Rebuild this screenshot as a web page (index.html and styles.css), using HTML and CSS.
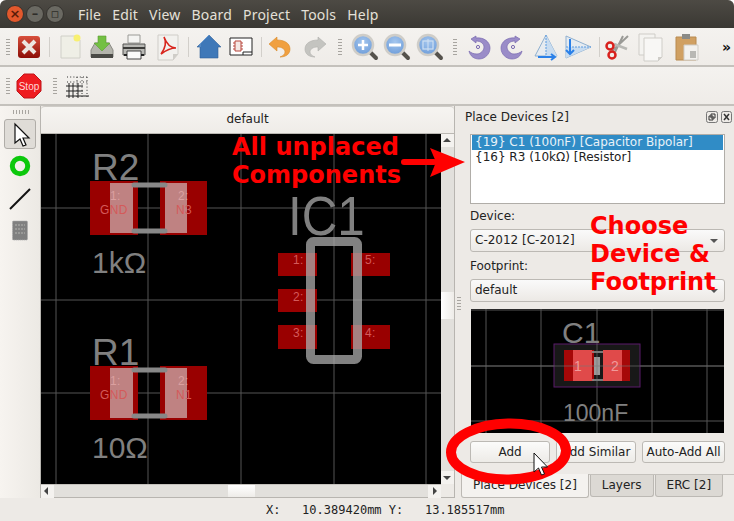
FILE: index.html
```html
<!DOCTYPE html>
<html lang="en">
<head>
    <meta charset="UTF-8" />
    <title>LibrePCB Board Editor</title>
    <link rel="stylesheet" href="styles.css">
</head>
<body>
<div class="window">
    <!-- title bar -->
    <div class="titlebar">
        <div class="winbtns">
            <span class="winbtn close">×</span>
            <span class="winbtn">–</span>
            <span class="winbtn">▫</span>
        </div>
        <nav class="menu">
            <span>File</span><span>Edit</span><span>View</span><span>Board</span><span>Project</span><span>Tools</span><span>Help</span>
        </nav>
    </div>

    <!-- main toolbar -->
    <div class="toolbar tb-main">
        <span class="handle"></span>
        <svg class="ic" viewBox="0 0 32 32"><defs><linearGradient id="ex" x1="0" y1="0" x2="0" y2="1"><stop offset="0" stop-color="#d8503c"/><stop offset="1" stop-color="#8c0d06"/></linearGradient><radialGradient id="lens" cx=".5" cy=".35" r=".7"><stop offset="0" stop-color="#a4c6ee"/><stop offset="1" stop-color="#6a9ad8"/></radialGradient></defs><rect x="5" y="5" width="22" height="22" rx="3" fill="url(#ex)"/><path d="M10 10l12 12M22 10L10 22" stroke="#ece6e0" stroke-width="4"/></svg>
        <span class="sep"></span>
        <svg class="ic" viewBox="0 0 32 32"><path d="M7 5h15l4 4v18H7z" fill="#efefe6" stroke="#d0d0c8"/><circle cx="23" cy="7" r="3.500" fill="#f8f070"/></svg>
        <svg class="ic" viewBox="0 0 32 32"><path d="M5 19l4-7h14l4 7v7H5z" fill="#b4b4ac" stroke="#8a8a84"/><path d="M5 23h22v4H5z" fill="#4a4a46"/><path d="M12 5h8v7h4l-8 8-8-8h4z" fill="#73c043" stroke="#5a9c30" stroke-width=".6"/></svg>
        <svg class="ic" viewBox="0 0 32 32"><path d="M10 4h12v8H10z" fill="#f4f4f2" stroke="#9a9a96"/><path d="M5 13h22v11H5z" fill="#b8b8b4" stroke="#555552"/><path d="M5 17h22" stroke="#3c3c3a" stroke-width="2"/><path d="M9 20h14v8H9z" fill="#fafafa" stroke="#444"/><path d="M6 24h3M23 24h3" stroke="#222" stroke-width="2"/></svg>
        <svg class="ic ic-m" viewBox="0 0 32 32"><path d="M6 4h20v19l-5 6H6z" fill="#f2f1ee" stroke="#cfcdc8"/><path d="M21 29l0-6h5z" fill="#cfcdc8"/><path d="M12 6c4 8-1 14-3 17 4-3 8-6 15-6-5 0-9-3-12-11z" fill="none" stroke="#d8261e" stroke-width="1.600"/></svg>
        <span class="sep"></span>
        <svg class="ic" viewBox="0 0 32 32"><path d="M16 4l12 12h-3v11H7V16H4l8-8z" fill="#3f78b8" stroke="#2f6098" stroke-width=".6"/><path d="M16 4L7 13v3" fill="none" stroke="#6a9ad0"/></svg>
        <svg class="ic" viewBox="0 0 32 32"><path d="M5 7h22v17H5z" fill="#fff" stroke="#222" stroke-width="1"/><path d="M18 24v-3h9" fill="none" stroke="#222"/><path d="M10 10h6v10h-6z" fill="#f4e8e4" stroke="#b8463c"/><path d="M8 12h2M8 15h2M8 18h2M16 12h2M16 15h2M16 18h2" stroke="#b8463c"/></svg>
        <span class="sep sep-s"></span>
        <svg class="ic" viewBox="0 0 32 32"><path d="M13 6l-8 7 8 7v-4c5 0 8 2 8 5 0 2-2 4-5 5 6 0 10-3 10-8 0-6-6-9-13-9z" fill="#f0a040" stroke="#d88a28" stroke-width=".6"/></svg>
        <svg class="ic ic-gap" viewBox="0 0 32 32"><path d="M19 6l8 7-8 7v-4c-5 0-8 2-8 5 0 2 2 4 5 5-6 0-10-3-10-8 0-6 6-9 13-9z" fill="#c4c4c0" stroke="#b0b0ac" stroke-width=".6"/></svg>
        <span class="handle h2"></span>
        <svg class="ic" viewBox="0 0 32 32"><path d="M19 19l8 8" stroke="#55524c" stroke-width="4" stroke-linecap="round"/><circle cx="14" cy="14" r="10" fill="url(#lens)" stroke="#cfcdc8" stroke-width="2.500"/><path d="M9 14h10M14 9v10" stroke="#fff" stroke-width="2.500"/></svg>
        <svg class="ic" viewBox="0 0 32 32"><path d="M19 19l8 8" stroke="#55524c" stroke-width="4" stroke-linecap="round"/><circle cx="14" cy="14" r="10" fill="url(#lens)" stroke="#cfcdc8" stroke-width="2.500"/><path d="M8 14h12" stroke="#fff" stroke-width="3"/></svg>
        <svg class="ic ic-one" viewBox="0 0 32 32"><path d="M19 19l8 8" stroke="#55524c" stroke-width="4" stroke-linecap="round"/><circle cx="14" cy="14" r="10" fill="url(#lens)" stroke="#cfcdc8" stroke-width="2.500"/><rect x="9" y="10" width="10" height="8" fill="none" stroke="#cfdff2" stroke-width="1.200"/><path d="M14 8v12" stroke="#cfdff2"/></svg>
        <span class="handle h3"></span>
        <svg class="ic" viewBox="0 0 32 32"><path d="M13 5l-5 3 5 4v-2c5 0 8 3 8 6s-3 7-7 7c-3 0-6-1-8-3 1 5 5 8 10 8 6 0 11-5 11-11S21 6 13 7z" fill="#9a8cc8" stroke="#7a6ab0" stroke-width=".7"/><circle cx="15" cy="16" r="1.600" fill="none" stroke="#7a6ab0"/></svg>
        <svg class="ic ic-one" viewBox="0 0 32 32"><path d="M19 5l5 3-5 4v-2c-5 0-8 3-8 6s3 7 7 7c3 0 6-1 8-3-1 5-5 8-10 8-6 0-11-5-11-11S11 6 19 7z" fill="#9a8cc8" stroke="#7a6ab0" stroke-width=".7"/><circle cx="17" cy="16" r="1.600" fill="none" stroke="#7a6ab0"/></svg>
        <svg class="ic ic-m" viewBox="0 0 32 32"><path d="M16 4L5 25h22z" fill="#e6ebf0" stroke="#8fb0d0"/><path d="M16 4l11 21H16z" fill="#c8dcf0"/><path d="M16 4v24" stroke="#5a9ae0" stroke-dasharray="2 1"/><path d="M8 26h16m-3-3l4 3-4 3" fill="none" stroke="#2a80e8" stroke-width="2"/></svg>
        <svg class="ic" viewBox="0 0 32 32"><path d="M4 5l25 11L4 27z" fill="#e6ebf0" stroke="#8fb0d0"/><path d="M4 16h25L4 27z" fill="#c8dcf0"/><path d="M4 16h25" stroke="#5a9ae0" stroke-dasharray="2 1"/><path d="M8 8v14m-4-3l4 4 4-4" fill="none" stroke="#2a80e8" stroke-width="2"/></svg>
        <span class="sep sep-m"></span>
        <svg class="ic" viewBox="0 0 32 32"><path d="M27 5L11 20M22 5L14 21" stroke="#9a9a96" stroke-width="2"/><path d="M26 18L13 13" stroke="#b8b8b4" stroke-width="2.500"/><circle cx="9" cy="15" r="3.500" fill="none" stroke="#d8201c" stroke-width="2.500"/><circle cx="11" cy="24" r="3.500" fill="none" stroke="#d8201c" stroke-width="2.500"/></svg>
        <svg class="ic ic-one" viewBox="0 0 32 32"><path d="M5 3h16v21H5z" fill="#f4f3f0" stroke="#cfcdc8"/><path d="M10 7h18v19l-4 4H10z" fill="#f8f7f5" stroke="#cfcdc8"/><path d="M24 30v-4h4z" fill="#cfcdc8"/></svg>
        <svg class="ic ic-four" viewBox="0 0 32 32"><path d="M6 6h20v23H6z" fill="#d0a062" stroke="#b88a50"/><path d="M12 3h8v5h-8z" fill="#8a8a86"/><path d="M14 14h14v15H14z" fill="#f2f1ee" stroke="#cfcdc8"/><path d="M20 20h6v7h-6z" fill="#b8b8b4"/></svg>
        <span class="more">»</span>
    </div>

    <!-- second toolbar -->
    <div class="toolbar tb-second">
        <span class="handle"></span>
        <svg class="ic" viewBox="0 0 32 32"><path d="M11 4h10l7 7v10l-7 7H11l-7-7V11z" fill="#ee1c20" stroke="#c0141a"/><text x="16" y="20" class="stop-txt">Stop</text></svg>
        <span class="handle h4"></span>
        <svg class="ic" viewBox="0 0 32 32"><g fill="none" stroke="#333" stroke-dasharray="1 2.200"><path d="M7 7h22M7 12h22M17 7v20M22 7v20M27 7v20"/></g><path d="M6 16h17M6 21h17M6 26h23M9 13v15M13 13v15M18 13v15" stroke="#222" fill="none"/></svg>
    </div>

    <div class="main">
        <!-- left tools -->
        <div class="tools">
            <span class="handle-h"></span>
            <button class="toolbtn active"><svg width="30" height="28" viewBox="0 0 30 28"><path d="M10 4v19l5-4 3 7 3-1-3-7h6z" fill="#fff" stroke="#111" stroke-width="1.200"/></svg></button>
            <svg class="tool" viewBox="0 0 32 32"><circle cx="16" cy="16" r="7.700" fill="none" stroke="#0cc80c" stroke-width="5"/></svg>
            <svg class="tool" viewBox="0 0 32 32"><path d="M6 26L26 6" stroke="#111" stroke-width="2"/></svg>
            <svg class="tool" viewBox="0 0 32 32"><rect x="8.500" y="5" width="15" height="19" rx="1" fill="#808080" stroke="#aaa" stroke-dasharray="1 1"/><path d="M11 9h10M11 13h10M11 17h10" stroke="#b4b4b0" stroke-dasharray="2 1"/></svg>
        </div>

        <!-- board editor -->
        <div class="editor">
            <div class="tab">default</div>
            <div class="view">
                <svg class="canvas" viewBox="41 134 400 350">
                    <g class="grid">
                        <path d="M56 134v350M148 134v350M241 134v350M334 134v350M426 134v350M41 208h400M41 300h400M41 393h400"/>
                    </g>
                    <g class="pads">
                        <rect x="90" y="181" width="48" height="54"/><rect x="160" y="181" width="47" height="54"/>
                        <rect x="90" y="366" width="48" height="54"/><rect x="160" y="366" width="47" height="54"/>
                        <rect x="278" y="253" width="39" height="23"/><rect x="351" y="253" width="39" height="23"/>
                        <rect x="278" y="289" width="39" height="23"/>
                        <rect x="278" y="325" width="39" height="24"/><rect x="351" y="325" width="39" height="24"/>
                    </g>
                    <g class="overlay">
                        <rect x="110" y="183" width="23" height="50"/><rect x="165" y="183" width="22" height="50"/>
                        <rect x="110" y="368" width="23" height="50"/><rect x="165" y="368" width="22" height="50"/>
                    </g>
                    <path class="silk" d="M134 185h31M134 231h31M134 370h31M134 416h31"/>
                    <rect class="outline" x="310.500" y="241.500" width="47" height="118" rx="3"/>
                    <g class="padtxt">
                        <text x="110" y="200" class="pin">1:</text><text x="100" y="214">GND</text>
                        <text x="178" y="200" class="pin">2:</text><text x="176" y="214">N3</text>
                        <text x="110" y="385" class="pin">1:</text><text x="100" y="399">GND</text>
                        <text x="178" y="385" class="pin">2:</text><text x="176" y="399">N1</text>
                        <text x="293" y="264">1:</text><text x="365" y="264">5:</text>
                        <text x="293" y="301">2:</text>
                        <text x="293" y="337">3:</text><text x="365" y="337">4:</text>
                    </g>
                    <g class="label">
                        <text x="92" y="180">R2</text><text x="92" y="273" class="val">1kΩ</text>
                        <text x="92" y="365">R1</text><text x="92" y="458" class="val">10Ω</text>
                        <text transform="translate(288 235) scale(.88 1)" class="big">IC1</text>
                    </g>
                </svg>
                <div class="vscroll">
                    <span class="arrow up"></span>
                    <span class="vthumb"></span>
                    <span class="arrow down"></span>
                </div>
                <div class="hscroll">
                    <span class="arrow left"></span>
                    <span class="hthumb"></span>
                    <span class="arrow right"></span>
                </div>
                <span class="corner"></span>
            </div>
        </div>

        <span class="dock-grip"></span>

        <!-- dock -->
        <div class="dock">
            <div class="dock-title">
                <span>Place Devices [2]</span>
                <span class="dock-btns">
                    <svg width="12" height="12" viewBox="0 0 12 12"><rect x=".5" y=".5" width="11" height="11" rx="2" fill="none" stroke="#777"/><path d="M5 3h4v4H5zM3 5h4v4H3z" fill="none" stroke="#333"/></svg>
                    <svg width="11" height="12" viewBox="0 0 11 12"><rect x=".5" y=".5" width="10" height="11" rx="2" fill="none" stroke="#777"/><path d="M3 3l5 6M8 3L3 9" stroke="#333" stroke-width="1.500"/></svg>
                </span>
            </div>
            <div class="dock-body">
                <ul class="list">
                    <li class="selected">{19} C1 (100nF) [Capacitor Bipolar]</li>
                    <li>{16} R3 (10kΩ) [Resistor]</li>
                </ul>
                <label class="fld">Device:</label>
                <div class="combo">C-2012 [C-2012]</div>
                <label class="fld">Footprint:</label>
                <div class="combo">default</div>
                <svg class="preview" viewBox="471 309 253 124">
                    <g class="grid">
                        <path d="M486 309v124M541 309v124M597 309v124M652 309v124M707 309v124M471 310h253M471 366h253M471 421h253"/>
                    </g>
                    <rect x="554" y="344" width="86" height="43" fill="#181818" stroke="#5a1a6a"/>
                    <rect x="564" y="350" width="30" height="31" fill="#a60808"/><rect x="603" y="350" width="27" height="31" fill="#a60808"/>
                    <rect x="573" y="350" width="19" height="31" fill="#e04a4a"/><rect x="603" y="350" width="19" height="31" fill="#e04a4a"/>
                    <path d="M592 352h11M592 380h11" stroke="#999" stroke-width="1.500"/>
                    <rect x="594" y="357" width="6" height="18" fill="#999"/>
                    <path d="M471 366h253M597 344v43" stroke="#777" opacity=".6"/>
                    <g class="padnum"><text x="574" y="371">1</text><text x="611" y="371">2</text></g>
                    <g class="label small"><text x="562" y="343" class="c1">C1</text><text x="563" y="421">100nF</text></g>
                </svg>
                <div class="btnrow">
                    <button class="btn">Add</button>
                    <button class="btn">Add Similar</button>
                    <button class="btn">Auto-Add All</button>
                </div>
            </div>
            <div class="tabs">
                <span class="dtab on">Place Devices [2]</span>
                <span class="dtab">Layers</span>
                <span class="dtab">ERC [2]</span>
            </div>
        </div>
    </div>

    <div class="statusbar">X:   10.389420mm Y:   13.185517mm</div>

    <!-- annotations drawn on top of the screenshot -->
    <div class="note note1">All unplaced<br>Components</div>
    <div class="note note2">Choose<br>Device &amp;<br>Footprint</div>
    <svg class="marks" viewBox="0 0 734 521">
        <path d="M404 162h30" stroke="#f00" stroke-width="6" stroke-linecap="round"/>
        <path d="M430 148l35 14-35 15 6-15z" fill="#f00"/>
        <ellipse cx="508.500" cy="451.500" rx="57.500" ry="28" fill="none" stroke="#f00" stroke-width="10" transform="rotate(-1 508 451)"/>
        <path d="M534 453v19l4.500-4 3 7 3-1-3-7h6z" fill="#fff" stroke="#111"/>
    </svg>
</div>
</body>
</html>
```
FILE: styles.css
```css
* {
    box-sizing: border-box;
}
html, body {
    margin: 0;
    background: #fff;
}
body {
    font-family: "DejaVu Sans", sans-serif;
    font-size: 12px;
    color: #222;
}
.window {
    position: relative;
    width: 734px;
    height: 521px;
    display: flex;
    flex-direction: column;
    background: #edeae6;
    overflow: hidden;
    border-radius: 6px 6px 0 0;
}

/* title bar */
.titlebar {
    height: 28px;
    flex: none;
    display: flex;
    align-items: center;
    background: linear-gradient(#4d4a44, #3a3833);
}
.winbtns {
    display: flex;
    gap: 2px;
    padding-left: 6px;
    width: 78px;
}
.winbtn {
    width: 18px;
    height: 18px;
    border-radius: 50%;
    background: #6a6962;
    border: 1px solid #35332f;
    color: #2e2d29;
    font-size: 13px;
    font-weight: bold;
    line-height: 15px;
    text-align: center;
}
.winbtn.close {
    background: #e2582c;
    color: #5a1c08;
}
.menu {
    display: flex;
    gap: 11px;
    color: #e4e0d8;
    font-family: "Noto Sans", sans-serif;
    font-size: 14px;
    letter-spacing: .2px;
}

/* toolbars */
.toolbar {
    flex: none;
    display: flex;
    align-items: center;
    background: linear-gradient(#f4f2ef, #efece8);
    border-bottom: 2px solid #c4c1bc;
}
.tb-main {
    height: 39px;
    padding-left: 6px;
}
.tb-second {
    height: 39px;
    padding-left: 6px;
}
.ic {
    width: 32px;
    height: 32px;
    flex: none;
}
.ic-gap {
    margin-left: 3px;
}
.ic-m {
    margin-left: 2px;
}
.ic-one {
    margin-left: 1px;
}
.ic-four {
    margin-left: 4px;
}
.handle {
    width: 4px;
    height: 18px;
    flex: none;
    margin-right: 3px;
    background-image: radial-gradient(#a8a5a0 40%, transparent 45%);
    background-size: 2px 3px;
}
.h2 {
    margin: 0 7px 0 7px;
}
.h3 {
    margin: 0 6px 0 7px;
}
.h4 {
    margin: 0 3px 0 8px;
}
.sep {
    width: 1px;
    height: 20px;
    flex: none;
    margin: 0 4px;
    background: #d2cfca;
}
.sep-s {
    margin: 0 2px 0 4px;
}
.sep-m {
    margin: 0 1px 0 5px;
}
.more {
    margin-left: 20px;
    font-weight: bold;
    font-size: 14px;
    color: #111;
}
.stop-txt {
    font-family: "Liberation Sans", sans-serif;
    font-size: 10px;
    fill: #ffd8d8;
    text-anchor: middle;
}

/* main area */
.main {
    flex: 1;
    display: flex;
    min-height: 0;
}
.tools {
    width: 40px;
    flex: none;
    display: flex;
    flex-direction: column;
    align-items: center;
    padding-top: 4px;
    background: linear-gradient(90deg, #f7f4f0, #ece9e4);
}
.handle-h {
    width: 17px;
    height: 4px;
    background-image: radial-gradient(#a8a5a0 40%, transparent 45%);
    background-size: 3px 2px;
    margin-bottom: 5px;
}
.toolbtn {
    width: 32px;
    height: 30px;
    padding: 0;
    border: 1px solid #b0ada8;
    border-radius: 3px;
    background: #dfdcd7;
}
.tool {
    width: 32px;
    height: 32px;
    margin-bottom: 1px;
}
.tool:first-of-type {
    margin-top: 1px;
}
.editor {
    width: 415px;
    flex: none;
    display: flex;
    flex-direction: column;
    border-left: 1px solid #b8b5b0;
    border-right: 1px solid #b8b5b0;
    border-bottom: 1px solid #b8b5b0;
}
.tab {
    height: 28px;
    flex: none;
    text-align: center;
    line-height: 24px;
    background: linear-gradient(#f6f4f1, #efece8);
    border-top: 1px solid #cfccc7;
    border-radius: 4px 4px 0 0;
    border-bottom: 1px solid #bbb8b3;
}
.view {
    flex: 1;
    display: grid;
    grid-template-columns: 400px 13px;
    grid-template-rows: 350px 13px;
}
.canvas {
    width: 400px;
    height: 350px;
    background: #000;
    display: block;
}
.grid path {
    fill: none;
    stroke: #555;
    stroke-width: 1;
}
.pads rect {
    fill: #990000;
}
.overlay rect {
    fill: #d8d8d8;
    opacity: .6;
}
.silk {
    fill: none;
    stroke: #888;
    stroke-width: 5;
    stroke-linecap: round;
}
.outline {
    fill: none;
    stroke: #aaa;
    stroke-opacity: .76;
    stroke-width: 9;
}
.padtxt text {
    font-family: "Liberation Sans", sans-serif;
    font-size: 12px;
    letter-spacing: .4px;
    fill: #d45a5a;
}
.padtxt .pin {
    fill: #dba0a0;
}
.label text {
    font-family: "Liberation Sans", sans-serif;
    font-size: 37px;
    fill: #808080;
}
.label .val {
    font-size: 30px;
}
.label .big {
    font-size: 56px;
}
.label.small text {
    font-size: 23px;
}
.label.small .c1 {
    font-size: 30px;
}
.padnum text {
    font-family: "Liberation Sans", sans-serif;
    font-size: 14px;
    fill: #f09a9a;
}
.vscroll {
    display: flex;
    flex-direction: column;
    background: #e2e0dc;
}
.hscroll {
    display: flex;
    background: #e2e0dc;
    border-top: 1px solid #c4c1bc;
}
.corner {
    background: #edeae6;
}
.arrow {
    flex: none;
    width: 13px;
    height: 13px;
    position: relative;
    background: #f4f2ef;
}
.arrow::after {
    content: "";
    position: absolute;
    left: 2px;
    top: 4px;
    border: 4px solid transparent;
    border-top: 0;
    border-bottom: 4px solid #444;
}
.arrow.down {
    margin-top: auto;
}
.arrow.down::after {
    border-bottom: 0;
    border-top: 4px solid #444;
    top: 5px;
}
.arrow.left::after {
    left: 3px;
    top: 2px;
    border: 4px solid transparent;
    border-left: 0;
    border-right: 4px solid #444;
}
.arrow.right {
    margin-left: auto;
}
.arrow.right::after {
    left: 5px;
    top: 2px;
    border: 4px solid transparent;
    border-right: 0;
    border-left: 4px solid #444;
}
.vthumb {
    height: 27px;
    margin-top: 145px;
    background: linear-gradient(90deg, #fff, #eeece8);
}
.hthumb {
    width: 27px;
    margin-left: 174px;
    background: linear-gradient(#fff, #eeece8);
}
.dock-grip {
    width: 4px;
    height: 16px;
    flex: none;
    margin: 190px 1px 0 2px;
    background-image: radial-gradient(#a8a5a0 40%, transparent 45%);
    background-size: 2px 3px;
}

/* dock */
.dock {
    flex: 1;
    display: flex;
    flex-direction: column;
    min-width: 0;
}
.dock-title {
    height: 22px;
    display: flex;
    justify-content: space-between;
    align-items: center;
    padding: 0 2px 0 3px;
}
.dock-btns {
    display: flex;
    gap: 3px;
}
.dock-body {
    padding: 6px 9px 0 8px;
    flex: none;
}
.list {
    list-style: none;
    margin: 0;
    padding: 0 1px;
    height: 70px;
    background: #fff;
    border: 1px solid #b0ada8;
}
.list li {
    height: 15px;
    line-height: 15px;
    padding-left: 3px;
}
.list .selected {
    background: #308cc6;
    color: #e8f2f8;
}
.fld {
    display: block;
    margin-top: 4px;
    height: 20px;
    line-height: 20px;
}
.list + .fld {
    margin-top: 2px;
}
.combo {
    height: 23px;
    line-height: 21px;
    padding-left: 4px;
    background: linear-gradient(#fafafa, #ece9e5);
    border: 1px solid #bcb9b4;
    border-radius: 3px;
    position: relative;
    margin-top: 3px;
}
.combo::after {
    content: "";
    position: absolute;
    right: 6px;
    top: 9px;
    border: 4px solid transparent;
    border-bottom: 0;
    border-top: 4px solid #555;
}
.preview {
    display: block;
    width: 253px;
    height: 124px;
    margin: 7px 1px 0 1px;
    background: #000;
}
.btnrow {
    display: flex;
    gap: 6px;
    margin-top: 8px;
}
.btn {
    height: 22px;
    flex: 80;
    padding: 0;
    font: inherit;
    color: #222;
    background: linear-gradient(#fbfbfa, #edebe7);
    border: 1px solid #bcb9b4;
    border-radius: 3px;
}
.btn:last-child {
    flex: 83;
}
.tabs {
    display: flex;
    margin-top: 11px;
    margin-left: -1px;
    border-top: 1px solid #c4c1bc;
}
.dtab {
    height: 22px;
    line-height: 20px;
    margin-right: 1px;
    padding: 0 11px;
    background: #dcd9d4;
    border: 1px solid #bcb9b4;
    border-top: 0;
    border-radius: 0 0 3px 3px;
}
.dtab.on {
    height: 24px;
    line-height: 23px;
    margin-top: -1px;
    background: #f4f2ef;
}

/* status */
.statusbar {
    height: 23px;
    flex: none;
    padding-left: 266px;
    font-family: "DejaVu Sans Mono", monospace;
    font-size: 12px;
    line-height: 24px;
    white-space: pre;
}

/* annotations */
.note {
    position: absolute;
    color: #f00;
    font-weight: bold;
    font-size: 24px;
    line-height: 28px;
}
.note1 {
    left: 232px;
    top: 133px;
}
.note2 {
    left: 590px;
    top: 212px;
}
.marks {
    position: absolute;
    left: 0;
    top: 0;
    width: 734px;
    height: 521px;
    pointer-events: none;
}
```
